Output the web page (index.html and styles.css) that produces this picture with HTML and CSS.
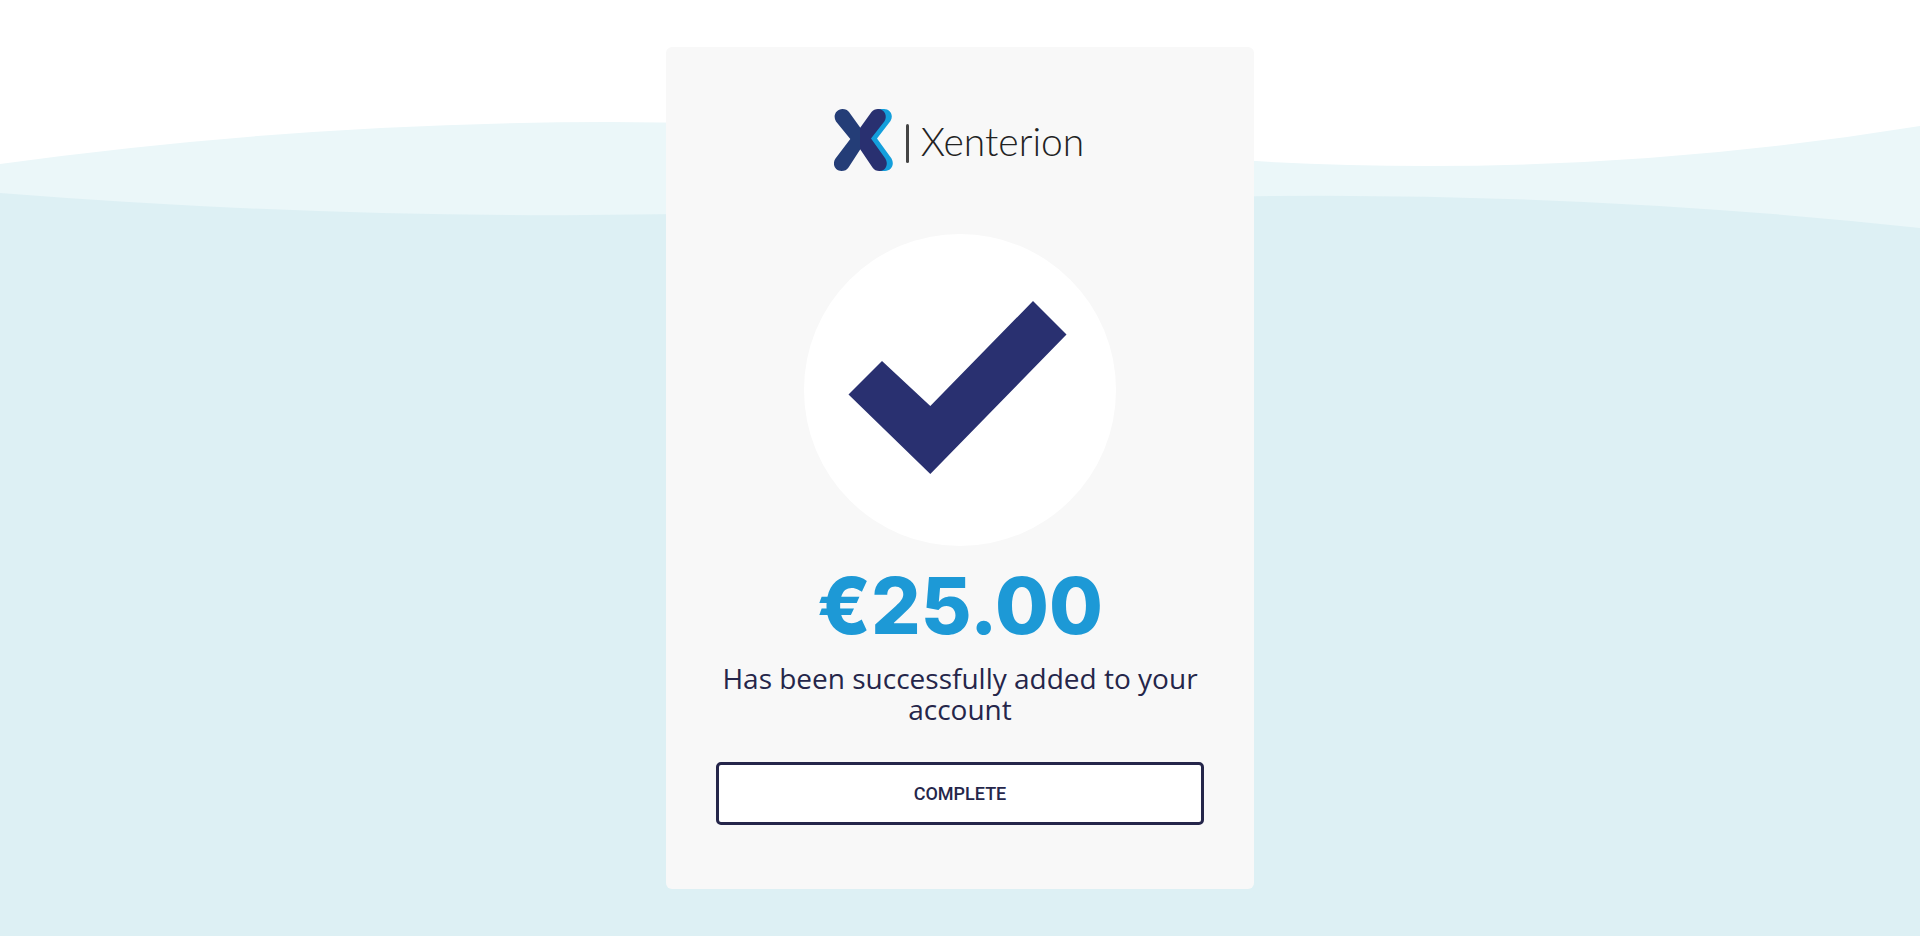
FILE: index.html
```html
<!DOCTYPE html>
<html lang="en">
<head>
  <meta charset="utf-8">
  <meta name="viewport" content="width=device-width, initial-scale=1">
  <title>Xenterion</title>
  <link rel="stylesheet" href="styles.css">
</head>
<body>
  <svg class="waves" viewBox="0 0 1920 936" preserveAspectRatio="none" aria-hidden="true">
    <path class="wave-back" d="M0 164Q480 98 960 136V130Q1440 204 1920 126V936H0Z"/>
    <path class="wave-front" d="M0 193Q480 231 960 204V208Q1440 176 1920 228V936H0Z"/>
  </svg>
  <main class="card">
    <header class="logo">
      <svg class="logo-mark" viewBox="0 0 60 62" aria-hidden="true">
        <path fill="#149fdc" d="M44 0H50C56 0 60 6 56.500 12L43 29.500 57.500 49.500C61 56 57 62 51 62H45L30 30Z"/>
        <path fill="#243d77" d="M8.500 0C11.500 0 13.500 1 15 3L26.500 19V40L14.500 58.500C13 61 10.500 62 7.500 62C1.500 62 -2.500 55.500 1.500 49.500L16.300 30 2 12.500C-1.500 7 2 0 8.500 0Z"/>
        <path fill="#293070" d="M26 19L37.500 3C39 1 41.500 0 44 0C50.500 0 54 7 50.300 12.500L37 29.500 51.300 49.500C55 55.500 51.500 62 45.500 62C42.500 62 40 61 38.500 58.500L26 40Z"/>
      </svg>
      <span class="logo-bar"></span>
      <span class="logo-name">Xenterion</span>
    </header>
    <svg class="badge" viewBox="0 0 312 312" role="img" aria-label="Success">
      <circle cx="156" cy="156" r="156" fill="#fff"/>
      <path fill="#293070" d="M44.500 160.500L78 127 126.300 172 229 67 262.500 100.500 126.300 240Z"/>
    </svg>
    <h1 class="amount">€25.00</h1>
    <p class="message">Has been successfully added to your account</p>
    <button class="complete" type="button">COMPLETE</button>
  </main>
</body>
</html>
```
FILE: styles.css
```css
* {
  box-sizing: border-box;
}

body {
  margin: 0;
  min-height: 100vh;
  display: flex;
  align-items: center;
  justify-content: center;
  background: #fff;
  color: #25264a;
  font-family: "Open Sans", sans-serif;
}

.waves {
  position: fixed;
  inset: 0;
  z-index: -1;
  width: 100%;
  height: 100%;
}

.wave-back {
  fill: #ebf7f9;
}

.wave-front {
  fill: #ddf0f4;
}

.card {
  display: flex;
  flex-direction: column;
  align-items: center;
  width: 100%;
  max-width: 588px;
  padding: 62px 50px 64px;
  border-radius: 6px;
  background: #f8f8f8;
}

.logo {
  display: flex;
  align-items: center;
  gap: 12px;
  margin-bottom: 63px;
  padding-right: 2px;
}

.logo-mark {
  width: 60px;
  height: 62px;
}

.logo-bar {
  width: 3px;
  height: 39px;
  margin-top: 6px;
  border-radius: 2px;
  background: #444;
}

.logo-name {
  margin-top: 2px;
  color: #222;
  font: 300 39px/48px Lato, sans-serif;
}

.badge {
  width: 312px;
  max-width: 100%;
}

.amount {
  margin: 12px 0 0;
  color: #1d99d6;
  font: 800 78px/96px Inter, sans-serif;
}

.message {
  margin: 9px 0 37px;
  font-size: 28px;
  font-weight: 500;
  line-height: 31px;
  text-align: center;
}

.complete {
  width: 100%;
  height: 63px;
  border: 3px solid #25264a;
  border-radius: 5px;
  background: #fff;
  color: #25264a;
  font: 500 18px/24px Roboto, sans-serif;
  cursor: pointer;
}
```
